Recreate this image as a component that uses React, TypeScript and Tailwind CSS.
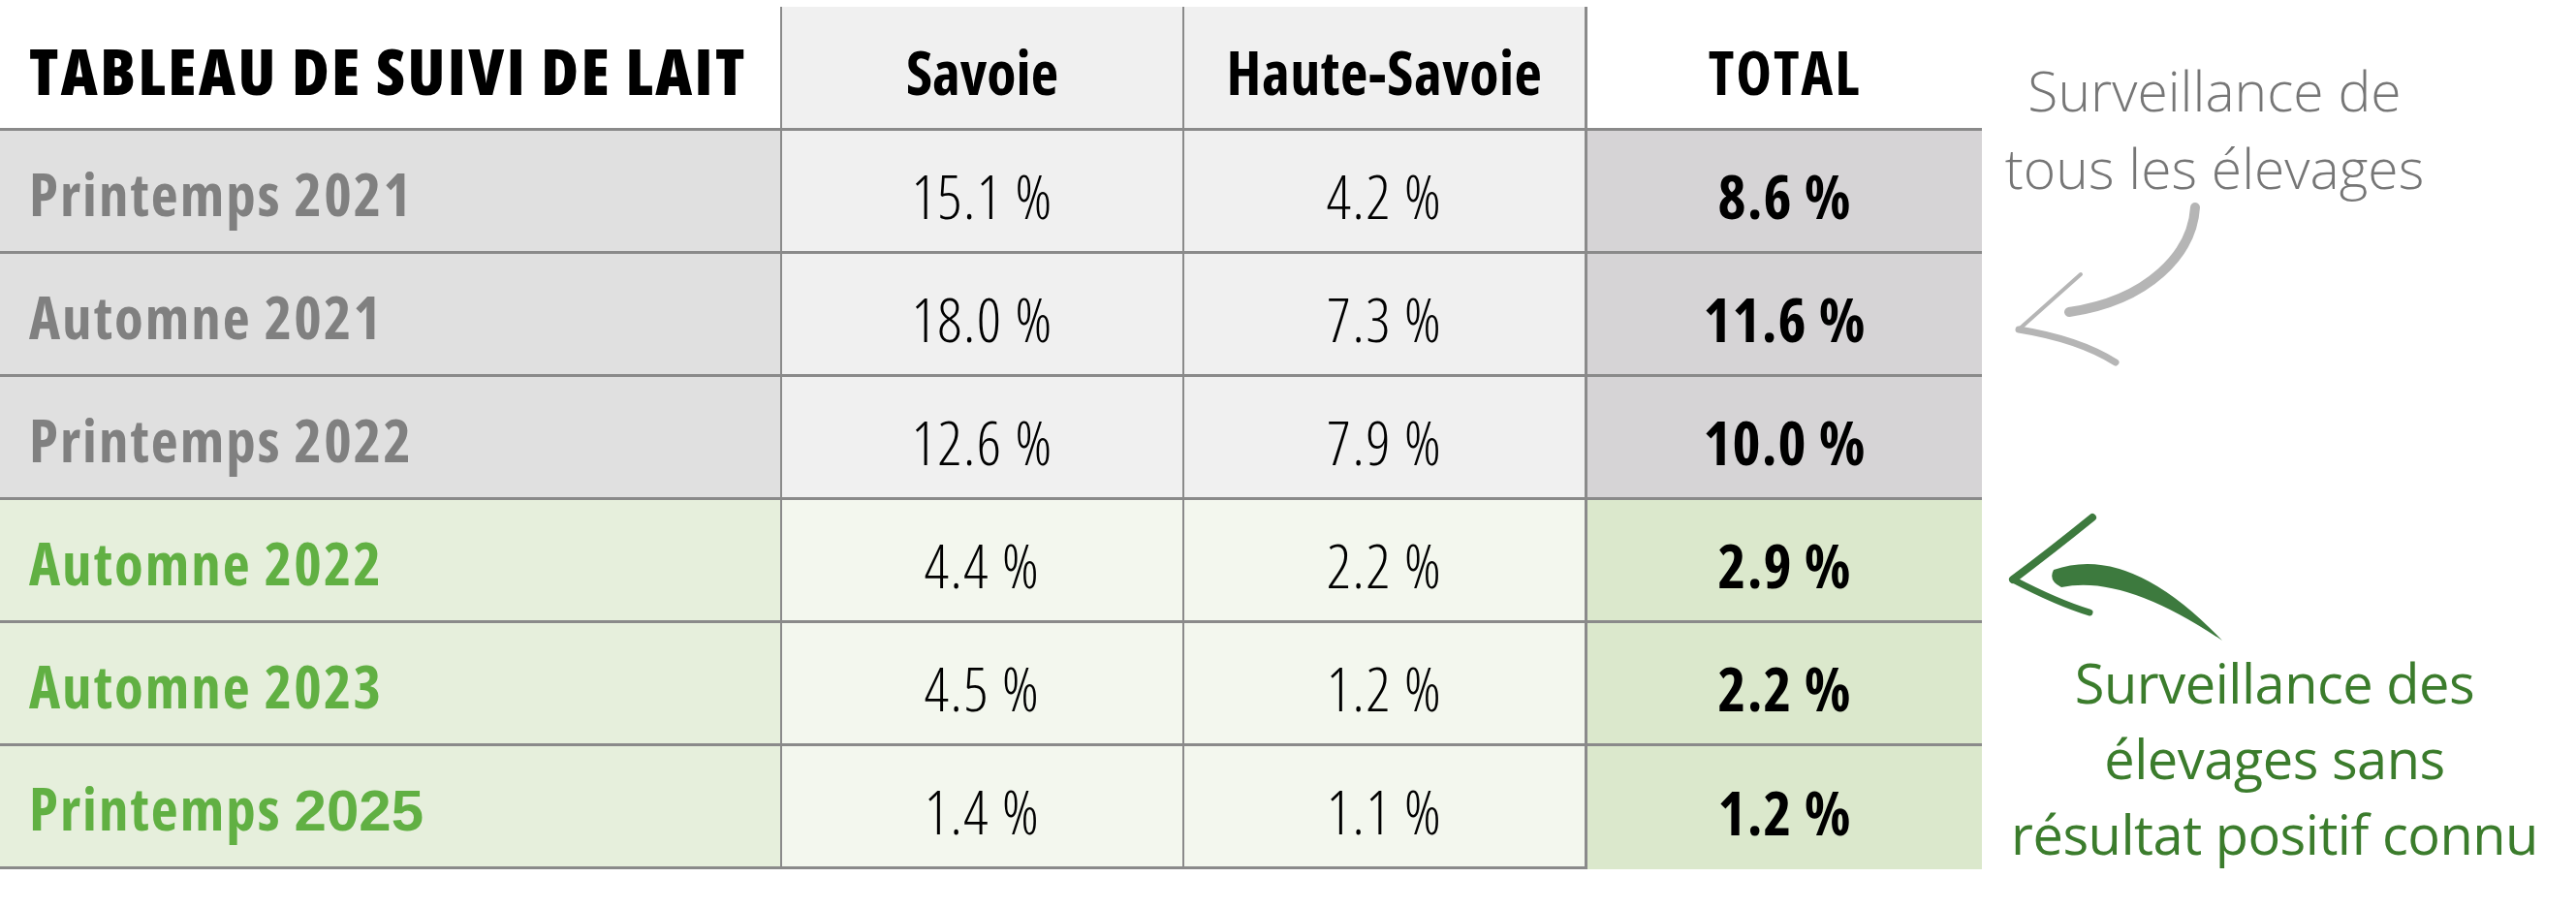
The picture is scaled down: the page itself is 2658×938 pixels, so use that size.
import React from "react";

type Row = { label: string; year: string; s: string; h: string; t: string; green: boolean; arialYear?: boolean };

const rows: Row[] = [
  { label: "Printemps", year: "2021", s: "15.1 %", h: "4.2 %", t: "8.6 %", green: false },
  { label: "Automne", year: "2021", s: "18.0 %", h: "7.3 %", t: "11.6 %", green: false },
  { label: "Printemps", year: "2022", s: "12.6 %", h: "7.9 %", t: "10.0 %", green: false },
  { label: "Automne", year: "2022", s: "4.4 %", h: "2.2 %", t: "2.9 %", green: true },
  { label: "Automne", year: "2023", s: "4.5 %", h: "1.2 %", t: "2.2 %", green: true },
  { label: "Printemps", year: "2025", s: "1.4 %", h: "1.1 %", t: "1.2 %", green: true, arialYear: true },
];

const font = "font-['Open_Sans','Noto_Sans',sans-serif]";

export default function App() {
  return (
    <div className={`flex w-[2658px] h-[938px] bg-white ${font}`}>
      {/* Table */}
      <div className="w-[2045px] pt-[7px] flex flex-col">
        {/* Header */}
        <div className="grid grid-cols-[807px_415px_416px_407px] h-[128px]">
          <div className="flex items-center pl-[30px] bg-white border-r-2 border-b-[3px] border-[#8a8a8a]">
            <span className="text-[66px] font-extrabold text-black [font-stretch:75%] tracking-[2.5px] pt-[6px]">TABLEAU DE SUIVI DE LAIT</span>
          </div>
          <div className="flex items-center justify-center bg-[#f0f0f0] border-r-2 border-b-[3px] border-[#8a8a8a]">
            <span className="text-[62px] font-bold text-black [font-stretch:75%] pt-[10px]">Savoie</span>
          </div>
          <div className="flex items-center justify-center bg-[#f0f0f0] border-r-[3px] border-b-[3px] border-[#8a8a8a]">
            <span className="text-[62px] font-bold text-black [font-stretch:75%] tracking-[0.5px] pt-[10px]">Haute-Savoie</span>
          </div>
          <div className="flex items-center justify-center bg-white border-b-[3px] border-[#8a8a8a]">
            <span className="text-[62px] font-bold text-black [font-stretch:75%] tracking-[2px] pt-[10px]">TOTAL</span>
          </div>
        </div>
        {rows.map((r, i) => {
          const last = i === rows.length - 1;
          const labelBg = r.green ? "bg-[#e6efdc]" : "bg-[#e0e0e0]";
          const cellBg = r.green ? "bg-[#f3f7ee]" : "bg-[#f0f0f0]";
          const totalBg = r.green ? "bg-[#dbe8cc]" : "bg-[#d6d4d6]";
          const labelColor = r.green ? "text-[#61b043]" : "text-[#808080]";
          return (
            <div key={r.label + r.year} className="grid grid-cols-[807px_415px_416px_407px] h-[127px]">
              <div className={`flex items-center pl-[30px] ${labelBg} border-r-2 border-b-[3px] border-[#8a8a8a]`}>
                <span className={`text-[61px] font-bold ${labelColor} [font-stretch:75%] tracking-[2px] pt-[6px]`}>
                  {r.label}{" "}
                  {r.arialYear ? (
                    <span className="font-['Liberation_Sans',Arial,sans-serif] text-[60px] tracking-[0px]">{r.year}</span>
                  ) : (
                    r.year
                  )}
                </span>
              </div>
              <div className={`flex items-center justify-center ${cellBg} border-r-2 border-b-[3px] border-[#8a8a8a]`}>
                <span className="text-[62px] font-light text-black [font-stretch:75%] tracking-[1.5px] pt-[10px]">{r.s}</span>
              </div>
              <div className={`flex items-center justify-center ${cellBg} border-r-[3px] border-b-[3px] border-[#8a8a8a]`}>
                <span className="text-[62px] font-light text-black [font-stretch:75%] tracking-[1.5px] pt-[10px]">{r.h}</span>
              </div>
              <div className={`flex items-center justify-center ${totalBg} ${last ? "" : "border-b-[3px] border-[#8a8a8a]"}`}>
                <span className="text-[62px] font-bold text-black [font-stretch:75%] tracking-[1px] pt-[10px]">{r.t}</span>
              </div>
            </div>
          );
        })}
      </div>

      {/* Annotations */}
      <div className="relative flex-1 flex flex-col">
        <div className="w-[480px] pt-[53px] text-center text-[57px] leading-[80px] font-light text-[#767676] [font-stretch:100%]">
          <div>Surveillance de</div>
          <div>tous les élevages</div>
        </div>
        <div className="w-[604px] mt-[452px] text-center text-[56px] leading-[78px] font-normal text-[#3b7c2c] [font-stretch:100%] tracking-[-0.5px]">
          <div>Surveillance des</div>
          <div>élevages sans</div>
          <div>résultat positif connu</div>
        </div>
        <svg className="absolute inset-0" width="613" height="938" viewBox="0 0 613 938" fill="none">
          {/* gray arrow */}
          <g stroke="#b5b5b5" strokeLinecap="round" fill="none">
            <path d="M220 214 C217 262 172 310 90 322" strokeWidth="10" />
            <path d="M102 283 L38 340" strokeWidth="4" />
            <path d="M38 340 Q100 350 138 374" strokeWidth="7" />
          </g>
          {/* green arrow */}
          <g fill="#3d7a3e">
            <path d="M74 588 Q152 560 248 661 Q146 592 82 606 Q68 599 74 588 Z" />
          </g>
          <g stroke="#3d7a3e" strokeLinecap="round" fill="none">
            <path d="M114 534 Q72 568 32 598" strokeWidth="8" />
            <path d="M32 598 Q78 622 111 632" strokeWidth="7" />
          </g>
        </svg>
      </div>
    </div>
  );
}
